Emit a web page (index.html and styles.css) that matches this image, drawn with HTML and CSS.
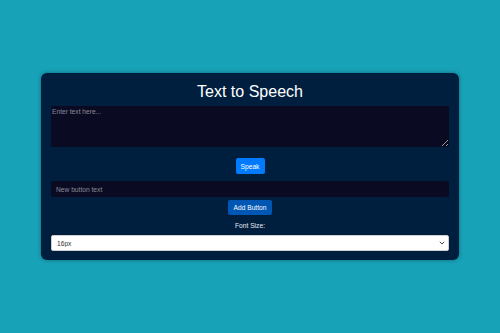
FILE: index.html
```html
<!DOCTYPE html>
<html lang="en">
<head>
<meta charset="utf-8">
<title>Text to Speech</title>
<link rel="stylesheet" href="styles.css">
</head>
<body>
  <div class="card">
    <h1 class="title">Text to Speech</h1>
    <textarea class="text-input" placeholder="Enter text here..."></textarea>
    <button class="btn btn-speak">Speak</button>
    <input class="btn-text" type="text" placeholder="New button text">
    <button class="btn btn-add">Add Button</button>
    <label class="label" for="fs">Font Size:</label>
    <div class="select-wrap">
      <select id="fs" class="select">
        <option>16px</option>
      </select>
      <svg class="chevron" width="6" height="4" viewBox="0 0 6 4"><path d="M0.8 0.8 L3 3 L5.2 0.8" fill="none" stroke="#444" stroke-width="1"/></svg>
    </div>
  </div>
</body>
</html>
```

FILE: styles.css
```css
html, body {
  margin: 0;
  padding: 0;
}
body {
  background: #17a2b8;
  width: 500px;
  height: 333px;
  display: flex;
  align-items: center;
  justify-content: center;
  font-family: "Liberation Sans", Arial, sans-serif;
}
.card {
  width: 398px;
  padding: 10px 10px 9px;
  background: #001f3f;
  border-radius: 6px;
  box-shadow: 0 0 4px rgba(0, 0, 0, 0.35);
  display: flex;
  flex-direction: column;
  align-items: center;
}
.title {
  margin: 0 0 5px;
  font-size: 16px;
  line-height: 18px;
  font-weight: normal;
  color: #ffffff;
}
.text-input {
  display: block;
  box-sizing: border-box;
  width: 100%;
  height: 41px;
  margin: 0;
  padding: 2px 1px;
  border: none;
  border-radius: 1px;
  background: #0a0a23;
  color: #ffffff;
  font-family: "Liberation Sans", Arial, sans-serif;
  font-size: 6.67px;
  outline: none;
}
.text-input::placeholder,
.btn-text::placeholder {
  color: #8a8a99;
}
.btn {
  border: none;
  border-radius: 2px;
  color: #ffffff;
  font-family: "Liberation Sans", Arial, sans-serif;
  font-size: 6.67px;
  padding: 0 5px;
  margin: 0;
}
.btn-speak {
  margin-top: 11px;
  height: 16px;
  width: 29px;
  padding: 0;
  background: #007bff;
}
.btn-text {
  box-sizing: border-box;
  width: 100%;
  height: 16px;
  margin: 7px 0 0;
  padding: 0 5px;
  border: none;
  border-radius: 2px;
  background: #0a0a23;
  color: #ffffff;
  font-family: "Liberation Sans", Arial, sans-serif;
  font-size: 6.67px;
  outline: none;
}
.btn-add {
  margin-top: 3px;
  height: 15px;
  width: 44px;
  padding: 0;
  background: #0056b3;
}
.label {
  margin-top: 6px;
  font-size: 6.67px;
  line-height: 10px;
  color: #e8e8ee;
}
.select-wrap {
  position: relative;
  width: 100%;
  margin-top: 4px;
}
.select {
  display: block;
  box-sizing: border-box;
  width: 100%;
  height: 16px;
  margin: 0;
  padding: 0 5px;
  border: 1px solid #cfcfcf;
  border-radius: 2px;
  background: #ffffff;
  color: #333333;
  font-family: "Liberation Sans", Arial, sans-serif;
  font-size: 6.67px;
  appearance: none;
  -webkit-appearance: none;
  outline: none;
}
.chevron {
  position: absolute;
  right: 4px;
  top: 6px;
}
```
